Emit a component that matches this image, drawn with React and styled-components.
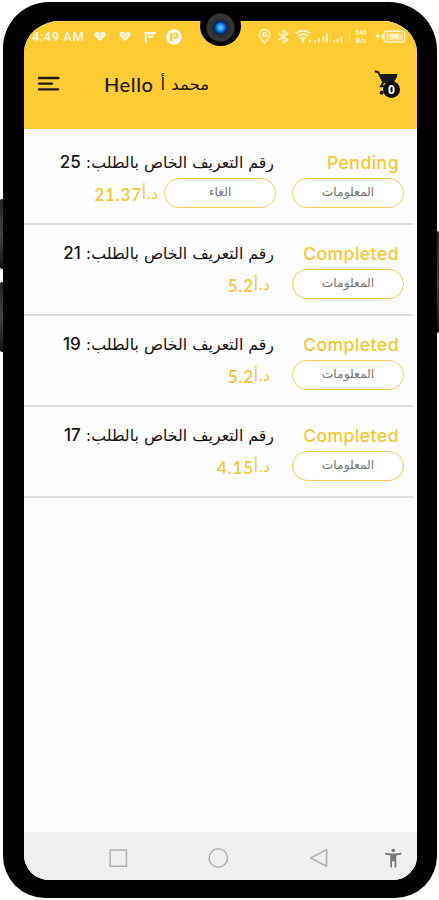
import React from 'react';

import styled, { createGlobalStyle } from 'styled-components'


const GlobalStyle = createGlobalStyle`
    * { box-sizing: border-box; }
    body {
        margin: 0;
        background: #fff;
        font-family: Lato, 'DejaVu Sans', sans-serif;
        overflow: hidden;
    }
    svg { display: block; flex: none; }
`

const orders = [
    { id: 25, status: 'Pending', price: '21.37', canCancel: true },
    { id: 21, status: 'Completed', price: '5.2' },
    { id: 19, status: 'Completed', price: '5.2' },
    { id: 17, status: 'Completed', price: '4.15' },
];

const HandsHeart = () => (
    <svg width="12" height="11" viewBox="0 0 12 11" fill="none">
        <path d="M6 10.3L.8 5Q-.5 2.2 2 1.1Q4 .3 6 2.2Q8 .3 10 1.1Q12.5 2.2 11.2 5Z" fill="#fffaf0"/>
        <path d="M2.6 2.6L5 4.8L7.6 2.6M5 7.4L8.8 4.2" stroke="#ffcc33" strokeWidth=".8"/>
    </svg>
)

const FlagIcon = () => (
    <svg width="12" height="12" viewBox="0 0 12 12" fill="#fffaf0">
        <path d="M0 1H12L10.8 3.2H2.8V12H0.8V3Z"/>
        <path d="M4 4.6H9.5L8.3 6.8H4Z"/>
    </svg>
)

const PatreonIcon = () => (
    <svg width="16" height="16" viewBox="0 0 16 16">
        <circle cx="8" cy="8" r="7.8" fill="#fffaf0"/>
        <path d="M4 4H6.3V12H4Z" fill="#ffcc33"/>
        <path d="M7.4 3.8H9.5A3 3 0 0 1 9.5 9.8H7.4Z" fill="#ffcc33"/>
        <circle cx="9.3" cy="6.7" r="1.1" fill="#fffaf0"/>
    </svg>
)

const StatusIcons = () => (
    <svg width="148" height="20" viewBox="0 0 148 20" fill="none" stroke="#fff3d0" strokeWidth="1.4">
        <path d="M6.5 15.8C2.5 11.5 1.3 9.5 1.3 7.7A5.2 5.2 0 0 1 11.7 7.7C11.7 9.5 10.5 11.5 6.5 15.8Z"/>
        <circle cx="6.5" cy="7.6" r="1.9"/>
        <path d="M20.8 6.5L29.5 12.8L25.5 15.8V3.5L29.5 6.6L20.8 12.8" strokeWidth="1.7"/>
        <path d="M37.5 6.4Q45 .8 52.5 6.4M40 9Q45 5.4 50 9M42.5 11.6Q45 9.8 47.5 11.6" strokeWidth="1.8"/>
        <path d="M45 12V15.5" strokeWidth="2"/>
        <path d="M52 12.5V15.5" strokeWidth="1.5"/>
        <path d="M57 13.5V15.5M61 11.5V15.5M65.5 9.5V15.5M69 6V15.5" strokeWidth="1.8"/>
        <path d="M72 4V15.5M88 7V15.5M91.5 4V15.5" strokeWidth=".8" opacity=".55"/>
        <path d="M76 13.5V15.5M79.5 11.5V15.5M83.3 9.5V15.5" strokeWidth="1.6"/>
        <path d="M120.5 4L117 10H119.6L118.2 14.8L122.3 8.3H119.6Z" fill="#fff3d0" stroke="none"/>
        <rect x="126" y="4.2" width="20.7" height="10.8" rx="2.5"/>
        <rect x="127.8" y="5.9" width="17.1" height="7.4" rx="1" fill="#fff3d0" fillOpacity=".5" stroke="none"/>
        <path d="M124.6 7.5V11.7" strokeWidth="2"/>
    </svg>
)

const MenuIcon = () => (
    <svg width="24" height="16" viewBox="0 0 24 16" stroke="#211c0b" strokeWidth="2.3" strokeLinecap="round">
        <path d="M2 2H21.5M2 7.7H15M2 13.4H21"/>
    </svg>
)

const CartIcon = () => (
    <svg width="28" height="28" viewBox="0 0 28 28" fill="#181b1e">
        <path d="M.8 1.3L4.3 2.3L9.5 12.5" stroke="#181b1e" strokeWidth="2" fill="none"/>
        <path d="M4.8 4H23.5Q22.5 10 19.5 11.7L9 13.6Z"/>
        <path d="M9.3 12.5L7 16.2H14" fill="none" stroke="#181b1e" strokeWidth="2"/>
        <circle cx="7.6" cy="22.8" r="2"/>
    </svg>
)

const BottomIcons = () => (
    <NavBar>
        <svg width="393" height="48" viewBox="0 0 393 48" fill="none" stroke="#b2b2b2" strokeWidth="1.6">
            <rect x="86.2" y="18" width="16.2" height="16.2"/>
            <circle cx="194.3" cy="26" r="9.2"/>
            <path d="M302.6 17.6V34.2L286.6 26Z" strokeLinejoin="round"/>
            <g fill="#777" stroke="none">
                <circle cx="369.3" cy="18.5" r="1.8"/>
                <path d="M361.1 20.8L367.3 21.5H371.3L377.5 20.8V22.4L372.3 23.4V35.5H370.6V29.2H368V35.5H366.3V23.4L361.1 22.4Z"/>
            </g>
        </svg>
    </NavBar>
)

const Order = ({ order }) => (
    <OrderRow>
        <Details>
            <OrderTitle dir="rtl">رقم التعريف الخاص بالطلب: <OrderId>{order.id}</OrderId></OrderTitle>
            <PriceLine>
                <Price $inset={!order.canCancel}><Amount>{order.price}</Amount><Currency dir="rtl">د.أ</Currency></Price>
                {order.canCancel ? <PillButton>الغاء</PillButton> : null}
            </PriceLine>
        </Details>
        <StatusColumn>
            <Status>{order.status}</Status>
            <PillButton>المعلومات</PillButton>
        </StatusColumn>
    </OrderRow>
)

const App = () => (
    <Stage>
        <GlobalStyle/>
        <SideButton $top={199} $height={70}/>
        <SideButton $top={282} $height={70}/>
        <SideButton $right $top={231} $height={102}/>
        <Phone>
            <Screen>
                <Header>
                    <StatusBar>
                        <Clock>4:49 AM</Clock>
                        <HandsHeart/>
                        <HandsHeart/>
                        <FlagIcon/>
                        <PatreonIcon/>
                        <RightIcons>
                            <StatusIcons/>
                            <NetSpeed><span>546</span><span>B/s</span></NetSpeed>
                            <BatteryText>99</BatteryText>
                        </RightIcons>
                    </StatusBar>
                    <Toolbar>
                        <MenuIcon/>
                        <Greeting><Hello>Hello</Hello><UserName dir="rtl">محمد أ</UserName></Greeting>
                        <Cart>
                            <CartIcon/>
                            <Badge>0</Badge>
                        </Cart>
                    </Toolbar>
                </Header>
                <Orders>
                    {orders.map(order => <Order key={order.id} order={order}/>)}
                </Orders>
                <BottomIcons/>
            </Screen>
            <Camera/>
        </Phone>
    </Stage>
)


const Stage = styled.div`
    position: relative;
    width: 439px;
    height: 900px;
    padding: 2px 2px 2px 3px;
    background: #fff;
    overflow: hidden;
`

const Phone = styled.div`
    position: relative;
    height: 896px;
    padding: 19px 20px 18px 21px;
    border-radius: 46px 48px 42px 42px;
    background: #000;
`

const SideButton = styled.div`
    position: absolute;
    top: ${props => props.$top}px;
    ${props => props.$right ? 'right: 0;' : 'left: 0;'}
    width: 8px;
    height: ${props => props.$height}px;
    border-radius: 2px;
    background: linear-gradient(#222, #444 50%, #111);
`

const Screen = styled.div`
    display: flex;
    flex-direction: column;
    height: 859px;
    border-radius: 36px 34px 24px 25px / 32px 32px 24px 25px;
    background: #fefefe;
    overflow: hidden;
`

const Camera = styled.div`
    position: absolute;
    left: 197px;
    top: 4px;
    width: 41px;
    height: 40px;
    border-radius: 50%;
    background: radial-gradient(circle at 50% 54%, #5bc4ff 0 1px, #087bef 4px, #032b65 6px, #272a2f 8px, #383838 13px, #000 15px);
`

const Header = styled.div`
    flex: none;
    height: 108px;
    background: #ffcb32;
`

const StatusBar = styled.div`
    display: flex;
    align-items: center;
    gap: 13px;
    height: 31px;
    padding-left: 8px;
`

const Clock = styled.div`
    width: 54px;
    margin-right: -5px;
    color: #fff8e5;
    font: 500 13px Roboto, sans-serif;
    letter-spacing: 0.5px;
    white-space: nowrap;

    & + svg + svg + svg + svg {
        margin-left: -3px;
    }
`

const RightIcons = styled.div`
    position: relative;
    flex: none;
    width: 148px;
    margin-left: 63px;
`

const NetSpeed = styled.div`
    position: absolute;
    left: 97px;
    top: 2px;
    display: flex;
    flex-direction: column;
    align-items: center;
    color: #fff3d0;
    font: 700 7px/8px Roboto, sans-serif;
`

const BatteryText = styled.div`
    position: absolute;
    left: 132px;
    top: 5px;
    color: #fff;
    font: 700 8px/9px Roboto, sans-serif;
`

const Toolbar = styled.div`
    display: flex;
    align-items: center;
    height: 64px;
    padding: 0 15px 0 13px;
`

const Greeting = styled.div`
    display: flex;
    align-items: center;
    gap: 7px;
    flex: 1;
    margin-left: 43px;
    color: #1d190e;
`

const Hello = styled.span`
    font-size: 20px;
    font-weight: 500;
    letter-spacing: 0.6px;
`

const UserName = styled.span`
    font: 16.5px 'DejaVu Sans', sans-serif;
    word-spacing: 1px;
`

const Cart = styled.div`
    position: relative;
    width: 28px;
    height: 28px;
`

const Badge = styled.div`
    position: absolute;
    left: 9px;
    top: 11px;
    width: 17px;
    height: 17px;
    border-radius: 50%;
    background: #0d0d0d;
    color: #fff;
    font: 700 12px/17px 'Open Sans', sans-serif;
    text-align: center;
`

const Orders = styled.div`
    flex: 1;
`

const OrderRow = styled.div`
    display: flex;
    justify-content: flex-end;
    gap: 16px;
    height: 91px;
    margin-right: 4px;
    padding: 20px 9px 0 0;
    border-bottom: 2px solid #dedede;

    &:first-child {
        height: 96px;
        padding-top: 25px;
    }
`

const Details = styled.div`
    display: flex;
    flex-direction: column;
    align-items: flex-end;
`

const OrderTitle = styled.div`
    height: 24px;
    padding-right: 2px;
    color: #151515;
    font: 15.8px/16px 'DejaVu Sans', sans-serif;
    white-space: nowrap;
`

const OrderId = styled.span`
    font: 500 17px/16px Inter, sans-serif;
`

const PriceLine = styled.div`
    display: flex;
    align-items: center;
    gap: 5px;
    height: 30px;
`

const Price = styled.div`
    display: flex;
    align-items: center;
    padding-right: ${props => props.$inset ? 6 : 1}px;
    padding-top: 2px;
    color: #f8c52e;
`

const Amount = styled.span`
    font-size: 17px;
    font-weight: 600;
    letter-spacing: 0.8px;
`

const Currency = styled.span`
    font: 15.5px 'DejaVu Sans', sans-serif;
`

const StatusColumn = styled.div`
    display: flex;
    flex-direction: column;
    align-items: flex-end;
`

const Status = styled.div`
    height: 24px;
    padding-right: 5px;
    color: #fac62f;
    font: 500 17.5px/18px Inter, sans-serif;
    letter-spacing: 0.5px;
`

const PillButton = styled.button`
    width: 112px;
    height: 30px;
    padding: 0 0 3px;
    border: 1.5px solid #f8cb58;
    border-radius: 15px;
    background: #fff;
    color: #777;
    font: 12.3px 'DejaVu Sans', sans-serif;
`

const NavBar = styled.div`
    flex: none;
    height: 48px;
    background: #efefef;
`

export default App;
